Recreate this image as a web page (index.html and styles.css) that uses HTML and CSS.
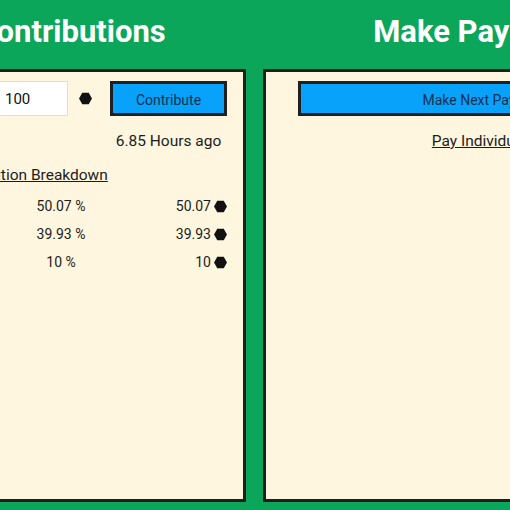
FILE: index.html
```html
<!DOCTYPE html>
<html>
<head>
<meta charset="utf-8">
<link rel="stylesheet" href="styles.css">
</head>
<body>
<div class="page">
  <section class="col">
    <h1 class="title">Contributions</h1>
    <div class="panel panel-left">
      <div class="row-input">
        <input class="amount" type="text" value="100">
        <svg class="hex" viewBox="0 0 12 12"><polygon points="3,0.8 9,0.8 12,6 9,11.2 3,11.2 0,6"/></svg>
        <button class="btn btn-small">Contribute</button>
      </div>
      <div class="row-time"><span class="time">6.85 Hours ago</span></div>
      <div class="breakdown-title"><span class="link">Contribution Breakdown</span></div>
      <div class="table">
        <div class="tr"><span class="name">Ann</span><span class="pct">50.07 %</span><span class="amt">50.07<svg class="hex sm" viewBox="0 0 12 12"><polygon points="3,0.8 9,0.8 12,6 9,11.2 3,11.2 0,6"/></svg></span></div>
        <div class="tr"><span class="name">Ben</span><span class="pct">39.93 %</span><span class="amt">39.93<svg class="hex sm" viewBox="0 0 12 12"><polygon points="3,0.8 9,0.8 12,6 9,11.2 3,11.2 0,6"/></svg></span></div>
        <div class="tr"><span class="name">Cal</span><span class="pct">10 %</span><span class="amt">10<svg class="hex sm" viewBox="0 0 12 12"><polygon points="3,0.8 9,0.8 12,6 9,11.2 3,11.2 0,6"/></svg></span></div>
      </div>
    </div>
  </section>
  <section class="col">
    <h1 class="title">Make Payments</h1>
    <div class="panel panel-right">
      <button class="btn btn-wide">Make Next Payment</button>
      <div class="pay-ind"><span class="link">Pay Individually</span></div>
    </div>
  </section>
</div>
</body>
</html>
```
FILE: styles.css
```css
html, body {
  margin: 0;
  padding: 0;
}
body {
  background: #0ba65a;
  overflow: hidden;
  font-family: Roboto, "Liberation Sans", sans-serif;
  color: #1c1c1c;
  height: 510px;
}
.page {
  display: grid;
  grid-template-columns: 350px 444px;
  column-gap: 17px;
  margin-left: -104px;
  width: 811px;
}
.title {
  margin: 0;
  height: 69px;
  box-sizing: border-box;
  padding-top: 16px;
  line-height: 31px;
  font-size: 31px;
  font-weight: 700;
  color: #fff;
  text-align: center;
  white-space: nowrap;
}
.panel {
  height: 433px;
  box-sizing: border-box;
  border: 3px solid #1f1f1f;
  background: #fff6df;
}
.panel-left {
  padding: 9px 16px;
}
.panel-right {
  padding: 9px 32px;
}
.row-input {
  display: flex;
  justify-content: flex-end;
  align-items: center;
}
.amount {
  width: 78px;
  height: 35px;
  box-sizing: border-box;
  border: 1px solid #e2ddd0;
  background: #fff;
  font-family: Roboto, sans-serif;
  font-size: 15px;
  color: #111;
  padding: 0 0 0 14px;
  margin: 0 11px 0 0;
  outline: none;
}
.hex {
  width: 13px;
  height: 13px;
  fill: #111;
  flex: none;
  margin-right: 18px;
}
.btn {
  height: 35px;
  box-sizing: border-box;
  border: 3px solid #202020;
  background: #08a2fb;
  color: #10304d;
  font-family: Roboto, sans-serif;
  font-size: 14px;
  padding: 2px 0 0;
  margin: 0;
}
.btn-small {
  width: 117px;
}
.btn-wide {
  display: block;
  width: 100%;
}
.row-time {
  display: flex;
  justify-content: flex-end;
  margin-top: 16px;
}
.time {
  width: 117px;
  text-align: center;
  font-size: 15.5px;
  line-height: 18px;
  white-space: nowrap;
}
.breakdown-title {
  margin-top: 16px;
  padding-left: 27px;
  font-size: 15.5px;
  line-height: 18px;
}
.link {
  text-decoration: underline;
  white-space: nowrap;
}
.table {
  margin-top: 8px;
}
.tr {
  display: grid;
  grid-template-columns: 101px 90px 1fr;
  font-size: 14px;
  line-height: 28px;
}
.pct {
  text-align: center;
}
.amt {
  display: flex;
  justify-content: flex-end;
  align-items: center;
  gap: 3px;
}
.hex.sm {
  margin-right: 0;
}
.pay-ind {
  margin-top: 16px;
  text-align: center;
  font-size: 15.5px;
  line-height: 18px;
}
```
